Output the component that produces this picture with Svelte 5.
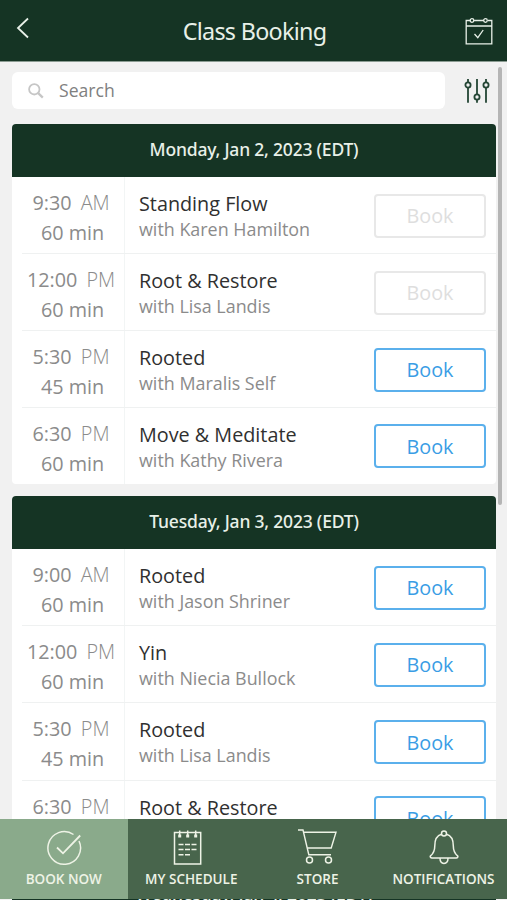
<script lang="ts">
	type Session = {
		time: string;
		period: string;
		length: number;
		name: string;
		teacher: string;
		closed?: boolean;
	};

	const days: { date: string; sessions: Session[] }[] = [
		{
			date: 'Monday, Jan 2, 2023 (EDT)',
			sessions: [
				{ time: '9:30', period: 'AM', length: 60, name: 'Standing Flow', teacher: 'Karen Hamilton', closed: true },
				{ time: '12:00', period: 'PM', length: 60, name: 'Root & Restore', teacher: 'Lisa Landis', closed: true },
				{ time: '5:30', period: 'PM', length: 45, name: 'Rooted', teacher: 'Maralis Self' },
				{ time: '6:30', period: 'PM', length: 60, name: 'Move & Meditate', teacher: 'Kathy Rivera' }
			]
		},
		{
			date: 'Tuesday, Jan 3, 2023 (EDT)',
			sessions: [
				{ time: '9:00', period: 'AM', length: 60, name: 'Rooted', teacher: 'Jason Shriner' },
				{ time: '12:00', period: 'PM', length: 60, name: 'Yin', teacher: 'Niecia Bullock' },
				{ time: '5:30', period: 'PM', length: 45, name: 'Rooted', teacher: 'Lisa Landis' },
				{ time: '6:30', period: 'PM', length: 60, name: 'Root & Restore', teacher: 'Lisa Landis' }
			]
		},
		{ date: 'Wednesday, Jan 4, 2023 (EDT)', sessions: [] }
	];

	const tabs = [
		{ id: 'book', label: 'BOOK NOW' },
		{ id: 'schedule', label: 'MY SCHEDULE' },
		{ id: 'store', label: 'STORE' },
		{ id: 'notifications', label: 'NOTIFICATIONS' }
	];

	let active = $state('book');
	let search = $state('');
</script>

<div class="app">
	<header>
		<button class="icon-button" aria-label="Back">
			<svg width="14" height="22" viewBox="0 0 14 22"><path d="M12 1.5 2 11l10 9.5" stroke-width="1.8" /></svg>
		</button>
		<h1>Class Booking</h1>
		<button class="icon-button" aria-label="Calendar">
			<svg width="28" height="28" viewBox="0 0 28 28" stroke-width="1.3">
				<path d="M5 3.5H1.2v23.3h25.6V3.5H23M9 3.5h10M1.2 9h25.6M9.5 17l3.3 3.7 5.4-7.7" />
				<circle cx="7" cy="3.5" r="1.8" />
				<circle cx="20.5" cy="3.5" r="1.8" />
			</svg>
		</button>
	</header>

	<div class="search-row">
		<label class="search">
			<svg width="16" height="16" viewBox="0 0 16 16" stroke-width="1.8">
				<circle cx="6.3" cy="6.3" r="5.2" />
				<path d="m10.2 10.2 4.6 4.4" stroke-width="2.3" />
			</svg>
			<input bind:value={search} placeholder="Search" />
		</label>
		<button class="icon-button filter" aria-label="Filter">
			<svg width="26" height="26" viewBox="0 0 26 26" stroke-width="1.8">
				<path d="M4 1v3.5M4 9.5v15.3M13 1v15.5M13 21.5v3.3M22 1v3.5M22 9.5v15.3" />
				<circle cx="4" cy="7" r="2.6" />
				<circle cx="13" cy="19" r="2.6" />
				<circle cx="22" cy="7" r="2.6" />
			</svg>
		</button>
	</div>

	<main>
		{#each days as day}
			<section>
				<h2>{day.date}</h2>
				{#each day.sessions as session}
					<div class="session">
						<div class="when">
							<div class="time">{session.time} <span>{session.period}</span></div>
							<div class="length">{session.length} min</div>
						</div>
						<div class="info">
							<div class="name">{session.name}</div>
							<div class="teacher">with {session.teacher}</div>
						</div>
						<button class="book" disabled={session.closed}>Book</button>
					</div>
				{/each}
			</section>
		{/each}
	</main>
	<div class="scrollbar"></div>

	<nav>
		{#each tabs as tab}
			<button class:active={active === tab.id} onclick={() => (active = tab.id)}>
				<svg width="42" height="38" viewBox="0 0 42 38" stroke-width="1.5">
					{#if tab.id === 'book'}
						<path d="M30.5 5.5A16.3 16.3 0 1 0 36 12" />
						<path d="m14 18.5 6 5.8L37.2 6.5" stroke-width="1.8" />
					{:else if tab.id === 'schedule'}
						<path d="M4.5 3.5h26.2V35H4.5z" />
						<path d="M9.7 1.5V8M17.7 1.5V8M25.7 1.5V8" />
						<path d="M9.7 5.5v3M17.7 5.5v3M25.7 5.5v3" stroke-width="3" />
						<path d="M8.5 15.5h18M8.5 20.5h18M8.5 25.8h12" stroke-dasharray="5 1.5" />
					{:else if tab.id === 'store'}
						<path d="M1 1h5l5.8 24.7H34M7 3.3h32L34.2 19H10.5" stroke-width="1.4" />
						<circle cx="12.5" cy="31" r="3" />
						<circle cx="31.5" cy="31" r="3" />
					{:else}
						<path d="M18.5 5.2c-5.5 1.5-6.7 6-6.7 11.5 0 5.3-1.4 7.8-4.3 10.2-.8.8.2 2.1 1.4 2.1h24.4c1.2 0 2.1-1.3 1.3-2.1-2.9-2.4-4.3-4.9-4.3-10.2 0-5.5-1.3-10-6.8-11.5" />
						<circle cx="21" cy="4.5" r="2.5" />
						<path d="M17 29c0 7.2 8 7.2 8 0" />
					{/if}
				</svg>
				<span>{tab.label}</span>
			</button>
		{/each}
	</nav>
</div>

<style>
	:global(body) {
		background: #f1f1f1;
	}
	.app {
		position: relative;
		width: 507px;
		height: 900px;
		overflow: hidden;
		background: #f1f1f1;
		font-family: 'Open Sans', 'Noto Sans', sans-serif;
	}
	button {
		font-family: inherit;
		padding: 0;
		border: none;
		background: none;
		color: inherit;
	}
	svg {
		display: block;
		fill: none;
		stroke: currentColor;
	}
	header {
		display: flex;
		align-items: center;
		justify-content: space-between;
		box-sizing: border-box;
		height: 62px;
		padding: 0 14px 0 16px;
		background: #153424;
		color: #e8f0e8;
		border-bottom: 1px solid #8b9c92;
	}
	header .icon-button {
		display: flex;
		width: 28px;
	}
	header .icon-button:first-child {
		margin-top: -5px;
	}
	h1 {
		margin: 1px 0 0;
		font: 400 23.3px/30px 'Noto Sans', sans-serif;
		letter-spacing: -0.7px;
	}
	.search-row {
		display: flex;
		align-items: center;
		height: 37px;
		padding: 10px 16px 15px 12px;
	}
	.search {
		display: flex;
		align-items: center;
		width: 433px;
		height: 37px;
		border-radius: 6px;
		background: #fff;
		color: #c6c6c6;
	}
	.search svg {
		margin-left: 16px;
	}
	.search input {
		width: 340px;
		margin: 0 0 2px 15px;
		padding: 0;
		border: none;
		outline: none;
		background: none;
		font: 17.6px 'Open Sans', sans-serif;
	}
	.search input::placeholder {
		color: #808080;
	}
	.filter {
		margin-left: 19px;
		color: #244635;
	}
	main {
		margin: 0 11px 0 12px;
	}
	section {
		margin-bottom: 12.5px;
		border-radius: 4px;
		background: #fff;
		overflow: hidden;
	}
	h2 {
		margin: 0;
		height: 53.1px;
		background: #153424;
		color: #e8f0e8;
		font: 500 17.5px/51px 'Noto Sans', sans-serif;
		letter-spacing: -0.2px;
		text-align: center;
	}
	.session {
		display: flex;
		align-items: center;
		position: relative;
		height: 77.1px;
		padding-right: 10px;
	}
	.session:last-child {
		height: 75.3px;
	}
	.session:not(:last-child)::after {
		content: '';
		position: absolute;
		left: 10px;
		right: 0;
		bottom: 0;
		height: 1px;
		background: #eff1f1;
	}
	.when {
		box-sizing: border-box;
		align-self: stretch;
		width: 113px;
		padding-top: 11px;
		border-right: 1px solid #f2f5f5;
		color: #8b8b8b;
		font-size: 19.8px;
		line-height: 30px;
		text-align: center;
	}
	.time {
		padding-left: 6px;
	}
	.time span {
		margin-left: 4px;
		font-weight: 300;
	}
	.length {
		padding-left: 9px;
	}
	.info {
		flex: 1;
		align-self: stretch;
		padding: 13px 0 0 14px;
	}
	.name {
		color: #303030;
		font-size: 19.8px;
		line-height: 27px;
	}
	.teacher {
		color: #8b8b8b;
		font-size: 17.9px;
		line-height: 24px;
	}
	.book {
		box-sizing: border-box;
		width: 112px;
		height: 44px;
		border: 2px solid #5bb0ec;
		border-radius: 4px;
		color: #3a9de5;
		font-size: 19.8px;
	}
	.book:disabled {
		border-color: #e8e8e8;
		color: #dedede;
	}
	.scrollbar {
		position: absolute;
		top: 67px;
		right: 5px;
		width: 4px;
		height: 438px;
		border-radius: 2px;
		background: #b5b5b5;
	}
	nav {
		position: absolute;
		left: 0;
		top: 819px;
		display: grid;
		grid-template-columns: 127.5px 127.5px 125px 127px;
		width: 507px;
		height: 80px;
		background: #48654c;
	}
	nav button {
		display: flex;
		flex-direction: column;
		align-items: center;
		padding-top: 10px;
		color: #eef3e6;
	}
	nav button.active {
		background: #8aaa8b;
	}
	nav span {
		margin-top: 3px;
		font-size: 13.5px;
		font-weight: 600;
		line-height: 18px;
		white-space: nowrap;
	}
</style>
